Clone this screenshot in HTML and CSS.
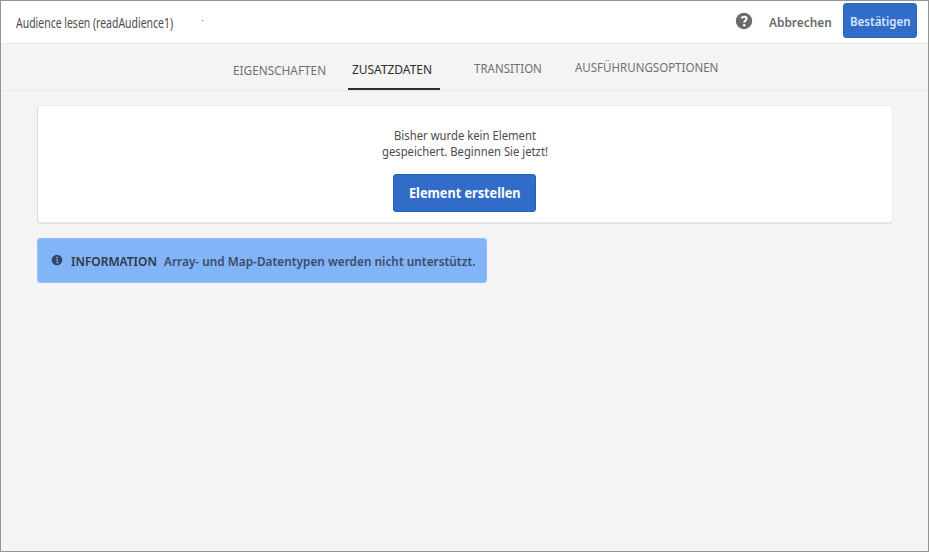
FILE: index.html
```html
<!DOCTYPE html>
<html lang="de">
<head>
<meta charset="utf-8">
<title>Audience lesen</title>
<link rel="stylesheet" href="styles.css">
</head>
<body>
<div class="window">
  <header class="topbar">
    <h1 class="title"><span class="fit">Audience lesen (readAudience1)</span></h1>
    <i class="speck"></i>
    <svg class="help" viewBox="0 0 18 18"><circle cx="9" cy="9" r="8.2" fill="#6b6b6b"/><path d="M6.3 6.2C7.6 4.2 11.6 4.1 11.6 6.7C11.6 8.6 9.2 8.6 9.2 10.8" fill="none" stroke="#fff" stroke-width="2"/><circle cx="9.2" cy="13.3" r="1.25" fill="#fff"/></svg>
    <button class="cancel"><span class="fit">Abbrechen</span></button>
    <button class="confirm"><span class="fit">Bestätigen</span></button>
  </header>
  <nav class="tabs">
    <a class="tab properties"><span class="fit">EIGENSCHAFTEN</span></a>
    <a class="tab additional"><span class="fit">ZUSATZDATEN</span></a>
    <a class="tab transition"><span class="fit">TRANSITION</span></a>
    <a class="tab execution"><span class="fit">AUSFÜHRUNGSOPTIONEN</span></a>
  </nav>
  <main>
    <section class="card">
      <p class="line first"><span class="fit">Bisher wurde kein Element</span></p>
      <p class="line second"><span class="fit">gespeichert. Beginnen Sie jetzt!</span></p>
      <button class="create"><span class="fit">Element erstellen</span></button>
    </section>
    <aside class="info">
      <svg class="info-icon" viewBox="0 0 12 12"><circle cx="6" cy="6" r="5.3" fill="#2f4666"/><path d="M4.9 5.2H6.4V8.6M4.9 8.8H7.4" fill="none" stroke="#82b4fa" stroke-width=".9"/><circle cx="6" cy="3.2" r=".8" fill="#82b4fa"/></svg>
      <strong class="label"><span class="fit">INFORMATION</span></strong>
      <span class="message"><span class="fit">Array- und Map-Datentypen werden nicht unterstützt.</span></span>
    </aside>
  </main>
</div>
</body>
</html>
```
FILE: styles.css
```css
* { box-sizing: border-box; }
body { margin: 0; font-family: "Noto Sans", "Open Sans", sans-serif; font-size: 12.5px; color: #4b4b4b; }
h1, p { margin: 0; font-weight: 400; }
button { border: 0; padding: 0; background: none; font: inherit; text-align: left; }
.fit { display: inline-block; white-space: nowrap; transform-origin: left center; }
.window { height: 552px; overflow: hidden; background: #f4f4f4; border: 1px solid #969691; }
.topbar { display: flex; height: 43px; background: #fff; border-bottom: 1px solid #e8e8e8; }
.title { width: 157px; margin: 12px 0 0 15px; font-size: 14px; line-height: 20px; color: #4b4b4b; }
.title .fit { transform: scaleX(.747); }
.speck { width: 1px; height: 1px; margin: 19px 0 0 29px; background: #777; }
.help { flex: none; width: 18px; height: 18px; margin: 11px 0 0 auto; }
.cancel { flex: none; width: 63px; height: 20px; margin: 12px 0 0 16px; line-height: 20px; font-weight: 600; color: #6a6a6a; }
.cancel .fit { transform: scaleX(.95); }
.confirm { flex: none; width: 74px; height: 35px; margin: 2px 11px 0 11px; padding: 1px 0 0 6px; border: 1px solid #2f68c2; border-radius: 3px; background: #326cc9; color: #d7e5fb; font-weight: 600; }
.confirm .fit { transform: scaleX(.92); }
.tabs { display: flex; height: 47px; padding-left: 232px; border-bottom: 1px solid #eaeaea; line-height: 20px; color: #707070; }
.tab { flex: none; }
.properties { width: 93px; margin-top: 17px; }
.properties .fit { transform: scaleX(.944); }
.additional { width: 92px; height: 46px; margin-left: 22px; padding: 16px 0 0 4px; border-bottom: 2px solid #2f2f2f; color: #2f2f2f; }
.additional .fit { transform: scaleX(.955); }
.transition { width: 68px; margin: 15px 0 0 34px; }
.transition .fit { transform: scaleX(.92); }
.execution { width: 144px; margin: 14px 0 0 33px; }
.execution .fit { transform: scaleX(.922); }
main { padding: 14px 35px 0 36px; }
.card { display: flex; flex-direction: column; height: 119px; padding-top: 22px; border: 1px solid #ececec; border-left-color: #dcdcdc; border-bottom: 2px solid #e4e4e4; border-radius: 4px; background: #fff; }
.line { height: 16px; line-height: 16px; }
.first { margin-left: 356px; }
.first .fit { transform: scaleX(.904); }
.second { margin-left: 344px; }
.second .fit { transform: scaleX(.901); }
.create { flex: none; width: 143px; height: 38px; margin: 14px 0 0 355px; padding-left: 15px; border: 1px solid #2460b9; border-radius: 3px; background: #326cc9; color: #fff; font-size: 13.5px; font-weight: 700; }
.create .fit { transform: scaleX(.94); }
.info { display: flex; width: 450px; height: 45px; margin-top: 14px; padding-left: 13px; border: 1px solid #91bdfb; border-radius: 3px; background: #82b4fa; line-height: 20px; font-weight: 600; color: #3c4c63; }
.info-icon { flex: none; width: 12px; height: 12px; margin-top: 15px; }
.label { flex: none; width: 86px; margin: 13px 0 0 8px; font-weight: 600; color: #2f3945; }
.label .fit { transform: scaleX(.957); }
.message { flex: none; margin: 13px 0 0 7px; }
.message .fit { transform: scaleX(.946); }
```
